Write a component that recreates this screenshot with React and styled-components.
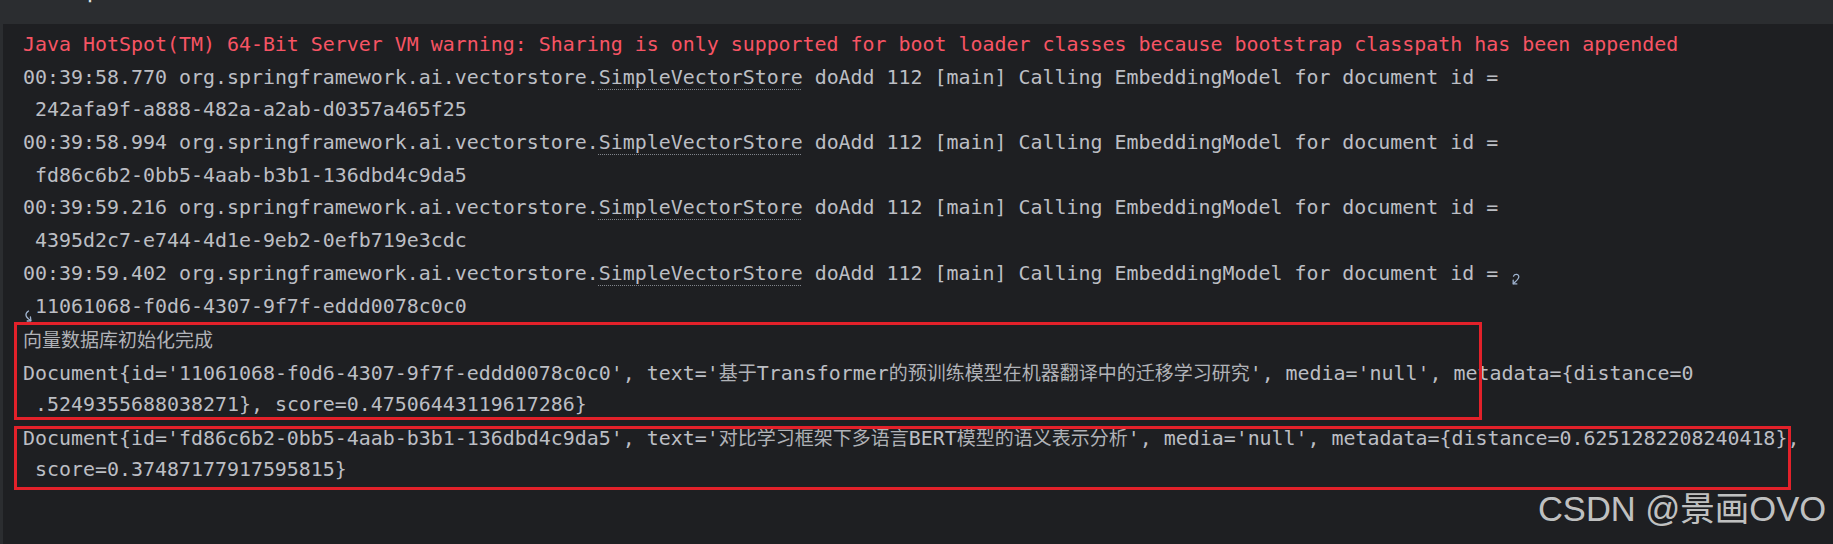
import React from "react";
import styled, { createGlobalStyle } from "styled-components";

const Global = createGlobalStyle`
  html, body { margin: 0; padding: 0; background: #1e1f22; }
  body { width: 1833px; height: 544px; overflow: hidden; }
  #root { width: 1833px; height: 544px; }
`;

const Page = styled.div`
  position: relative;
  width: 1833px;
  height: 544px;
  display: flex;
  flex-direction: column;
  background: #1e1f22;
  overflow: hidden;
`;

const Header = styled.div`
  height: 24px;
  flex: 0 0 24px;
  background: #2b2d30;
  overflow: hidden;
  display: flex;
  align-items: flex-start;
  padding-left: 10px;
  font-family: Inter, "Noto Sans", sans-serif;
  font-size: 17px;
  line-height: 20px;
`;

const HeaderInner = styled.div`
  margin-top: -17px;
  display: flex;
  align-items: center;
  gap: 14px;
  white-space: nowrap;
`;

const HeaderStrong = styled.span`
  color: ${(p) => p.$color || "#dfe1e5"};
  font-weight: 600;
`;

const HeaderMuted = styled.span`
  color: #8c8f95;
`;

const Body = styled.div`
  flex: 1;
  display: flex;
  min-height: 0;
`;

const Gutter = styled.div`
  width: 3px;
  flex: 0 0 3px;
  background: #2b2d30;
`;

const Console = styled.div`
  flex: 1;
  padding: 5px 0 0 20px;
  font-family: "DejaVu Sans Mono", "Noto Sans CJK SC", monospace;
  font-size: 19.93px;
  line-height: 32.7px;
  color: #bcbec4;
  white-space: pre;
  overflow: hidden;
`;

const Line = styled.div`
  height: 32.7px;
  color: ${(p) => (p.$error ? "#f75464" : "inherit")};
`;

const Link = styled.span`
  text-decoration-line: underline;
  text-decoration-style: dotted;
  text-decoration-color: #80848b;
  text-decoration-thickness: 1px;
  text-underline-offset: 5px;
`;

const Cjk = styled.span`
  font-family: "Noto Sans CJK SC", sans-serif;
  font-size: 19px;
  color: #b0b2b7;
`;

const Highlight = styled.div`
  position: relative;
  &::after {
    content: "";
    position: absolute;
    left: -9px;
    width: ${(p) => p.$width}px;
    top: ${(p) => p.$top}px;
    bottom: ${(p) => p.$bottom}px;
    border: 3px solid #e3212a;
    box-sizing: border-box;
    pointer-events: none;
  }
`;

const Marker = styled.svg`
  display: inline-block;
  vertical-align: ${(p) => p.$valign};
  width: 12px;
  height: 13px;
  overflow: visible;
`;

const Watermark = styled.div`
  position: absolute;
  right: 7px;
  bottom: 16px;
  font-family: "Liberation Sans", "Noto Sans CJK SC", sans-serif;
  font-size: 34.5px;
  line-height: 38px;
  color: rgba(255, 255, 255, 0.74);
  white-space: nowrap;
`;

const EndWrap = () => (
  <Marker $valign="-6px" viewBox="0 0 12 13" aria-hidden="true">
    <path
      d="M3.5 3.2 C4.5 0.8 9 0.8 8.8 3.8 C8.6 6.6 5.6 8.4 3.4 10.6"
      fill="none"
      stroke="#9fb3cf"
      strokeWidth="1.3"
      strokeLinecap="round"
    />
    <path
      d="M3.2 7.2 L3.2 10.9 L6.8 10.9"
      fill="none"
      stroke="#9fb3cf"
      strokeWidth="1.3"
      strokeLinecap="round"
      strokeLinejoin="round"
    />
  </Marker>
);

const StartWrap = () => (
  <Marker $valign="-10px" viewBox="0 0 12 13" aria-hidden="true">
    <path
      d="M5.5 1 C2 3.4 1.6 6.6 7.6 10.6"
      fill="none"
      stroke="#9fb3cf"
      strokeWidth="1.3"
      strokeLinecap="round"
    />
    <path
      d="M7.4 6.9 L7.9 10.8 L4.2 11"
      fill="none"
      stroke="#9fb3cf"
      strokeWidth="1.3"
      strokeLinecap="round"
      strokeLinejoin="round"
    />
  </Marker>
);

const LogLine = ({ time, end }) => (
  <Line>
    {time} org.springframework.ai.vectorstore.<Link>SimpleVectorStore</Link> doAdd 112 [main] Calling
    EmbeddingModel for document id ={end ? " " : ""}
    {end ? <EndWrap /> : null}
  </Line>
);

export default function App() {
  return (
    <Page>
      <Global />
      <Header>
        <HeaderInner>
          <HeaderStrong $color="#5fb865">✓</HeaderStrong>
          <span>
            <HeaderStrong>Tests passed: </HeaderStrong>
            <HeaderMuted>1 of 1 test – 1 sec 505 ms</HeaderMuted>
          </span>
        </HeaderInner>
      </Header>
      <Body>
        <Gutter />
        <Console>
          <Line $error>
            Java HotSpot(TM) 64-Bit Server VM warning: Sharing is only supported for boot loader classes because bootstrap classpath has been appended
          </Line>
          <LogLine time="00:39:58.770" />
          <Line> 242afa9f-a888-482a-a2ab-d0357a465f25</Line>
          <LogLine time="00:39:58.994" />
          <Line> fd86c6b2-0bb5-4aab-b3b1-136dbd4c9da5</Line>
          <LogLine time="00:39:59.216" />
          <Line> 4395d2c7-e744-4d1e-9eb2-0efb719e3cdc</Line>
          <LogLine time="00:39:59.402" end />
          <Line>
            <StartWrap />
            11061068-f0d6-4307-9f7f-eddd0078c0c0
          </Line>
          <Highlight $width={1468} $top={-1} $bottom={1}>
            <Line>
              <Cjk>向量数据库初始化完成</Cjk>
            </Line>
            <Line>
              Document{"{"}id='11061068-f0d6-4307-9f7f-eddd0078c0c0', text='<Cjk>基于</Cjk>Transformer
              <Cjk>的预训练模型在机器翻译中的迁移学习研究</Cjk>', media='null', metadata={"{"}distance=0
            </Line>
            <Line> .5249355688038271{"}"}, score=0.47506443119617286{"}"}</Line>
          </Highlight>
          <Highlight $width={1777} $top={5} $bottom={-3}>
            <Line>
              Document{"{"}id='fd86c6b2-0bb5-4aab-b3b1-136dbd4c9da5', text='<Cjk>对比学习框架下多语言</Cjk>BERT
              <Cjk>模型的语义表示分析</Cjk>', media='null', metadata={"{"}distance=0.6251282208240418{"}"},
            </Line>
            <Line> score=0.37487177917595815{"}"}</Line>
          </Highlight>
        </Console>
      </Body>
      <Watermark>CSDN @景画OVO</Watermark>
    </Page>
  );
}
